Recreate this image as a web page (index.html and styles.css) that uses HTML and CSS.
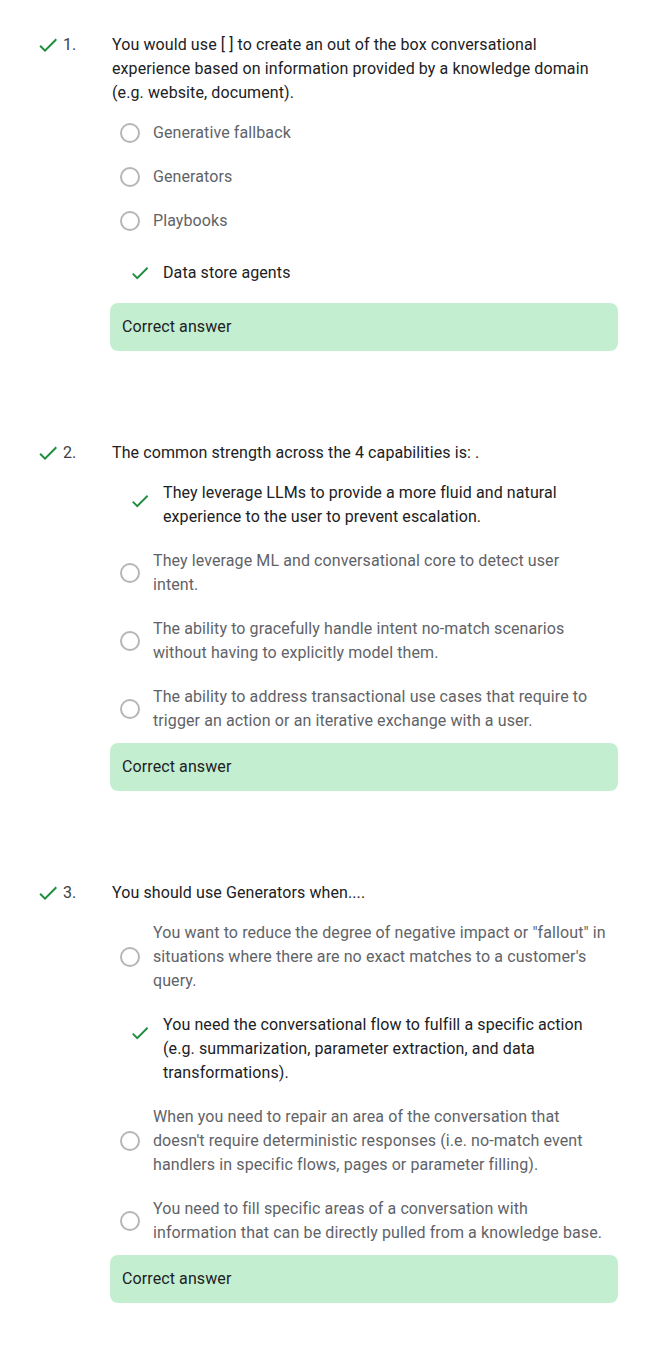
FILE: index.html
```html
<!DOCTYPE html>
<html lang="en">
<head>
<meta charset="utf-8">
<title>Quiz results</title>
<link rel="stylesheet" href="styles.css">
</head>
<body>
<main class="quiz">

  <section class="q">
    <div class="q-head">
      <span class="q-mark"><svg viewBox="0 0 24 24"><path d="M9 16.17L4.83 12l-1.42 1.41L9 19 21 7l-1.41-1.41z"/></svg></span>
      <span class="q-num">1.</span>
      <p class="q-text">You would use [ ] to create an out of the box conversational experience based on information provided by a knowledge domain (e.g. website, document).</p>
    </div>
    <div class="q-body">
      <ul class="opts">
        <li class="opt"><span class="radio-wrap"><span class="radio"></span></span><span class="opt-text">Generative fallback</span></li>
        <li class="opt"><span class="radio-wrap"><span class="radio"></span></span><span class="opt-text">Generators</span></li>
        <li class="opt"><span class="radio-wrap"><span class="radio"></span></span><span class="opt-text">Playbooks</span></li>
        <li class="opt opt-correct"><span class="check-wrap"><svg viewBox="0 0 24 24"><path d="M9 16.17L4.83 12l-1.42 1.41L9 19 21 7l-1.41-1.41z"/></svg></span><span class="opt-text">Data store agents</span></li>
      </ul>
      <div class="result">Correct answer</div>
    </div>
  </section>

  <section class="q">
    <div class="q-head">
      <span class="q-mark"><svg viewBox="0 0 24 24"><path d="M9 16.17L4.83 12l-1.42 1.41L9 19 21 7l-1.41-1.41z"/></svg></span>
      <span class="q-num">2.</span>
      <p class="q-text">The common strength across the 4 capabilities is: .</p>
    </div>
    <div class="q-body">
      <ul class="opts">
        <li class="opt opt-correct"><span class="check-wrap"><svg viewBox="0 0 24 24"><path d="M9 16.17L4.83 12l-1.42 1.41L9 19 21 7l-1.41-1.41z"/></svg></span><span class="opt-text">They leverage LLMs to provide a more fluid and natural experience to the user to prevent escalation.</span></li>
        <li class="opt"><span class="radio-wrap"><span class="radio"></span></span><span class="opt-text">They leverage ML and conversational core to detect user intent.</span></li>
        <li class="opt"><span class="radio-wrap"><span class="radio"></span></span><span class="opt-text">The ability to gracefully handle intent no-match scenarios without having to explicitly model them.</span></li>
        <li class="opt"><span class="radio-wrap"><span class="radio"></span></span><span class="opt-text">The ability to address transactional use cases that require to trigger an action or an iterative exchange with a user.</span></li>
      </ul>
      <div class="result">Correct answer</div>
    </div>
  </section>

  <section class="q">
    <div class="q-head">
      <span class="q-mark"><svg viewBox="0 0 24 24"><path d="M9 16.17L4.83 12l-1.42 1.41L9 19 21 7l-1.41-1.41z"/></svg></span>
      <span class="q-num">3.</span>
      <p class="q-text">You should use Generators when....</p>
    </div>
    <div class="q-body">
      <ul class="opts">
        <li class="opt"><span class="radio-wrap"><span class="radio"></span></span><span class="opt-text">You want to reduce the degree of negative impact or "fallout" in situations where there are no exact matches to a customer's query.</span></li>
        <li class="opt opt-correct"><span class="check-wrap"><svg viewBox="0 0 24 24"><path d="M9 16.17L4.83 12l-1.42 1.41L9 19 21 7l-1.41-1.41z"/></svg></span><span class="opt-text">You need the conversational flow to fulfill a specific action (e.g. summarization, parameter extraction, and data transformations).</span></li>
        <li class="opt"><span class="radio-wrap"><span class="radio"></span></span><span class="opt-text">When you need to repair an area of the conversation that doesn't require deterministic responses (i.e. no-match event handlers in specific flows, pages or parameter filling).</span></li>
        <li class="opt"><span class="radio-wrap"><span class="radio"></span></span><span class="opt-text">You need to fill specific areas of a conversation with information that can be directly pulled from a knowledge base.</span></li>
      </ul>
      <div class="result">Correct answer</div>
    </div>
  </section>

</main>
</body>
</html>
```

FILE: styles.css
```css
html, body {
  margin: 0;
  padding: 0;
  background: #ffffff;
}

body {
  font-family: Roboto, "Liberation Sans", Arial, sans-serif;
  font-size: 16px;
  letter-spacing: 0.1px;
  line-height: 24px;
  color: #202124;
}

.quiz {
  padding: 33px 41px 0 36px;
  display: flex;
  flex-direction: column;
  gap: 90px;
}

.q-head {
  display: flex;
  align-items: flex-start;
}

.q-mark {
  width: 24px;
  height: 24px;
  flex: none;
  display: flex;
  align-items: center;
  justify-content: center;
}

.q-mark svg {
  width: 24px;
  height: 24px;
  fill: #1e8e3e;
}

.q-num {
  width: 49px;
  margin-left: 3px;
  flex: none;
  color: #3c4043;
}

.q-text {
  margin: 0;
  flex: 1;
  color: #202124;
}

.q-body {
  margin-left: 74px;
}

.opts {
  list-style: none;
  margin: 16px 0 0;
  padding: 0 11px 0 0;
  display: flex;
  flex-direction: column;
  gap: 20px;
}

.opt {
  display: flex;
  align-items: center;
}

.radio-wrap {
  width: 40px;
  flex: none;
  display: flex;
  justify-content: center;
}

.radio {
  width: 20px;
  height: 20px;
  box-sizing: border-box;
  border: 2px solid #b6b6b6;
  border-radius: 50%;
}

.opt-text {
  margin-left: 3px;
  color: #5f6368;
}

.opt-correct {
  padding-left: 10px;
}

.check-wrap {
  width: 40px;
  height: 40px;
  flex: none;
  align-self: flex-start;
  display: flex;
  align-items: center;
  justify-content: center;
}

.check-wrap svg {
  width: 22px;
  height: 22px;
  fill: #1e8e3e;
}

.opt-correct .opt-text {
  color: #202124;
  align-self: center;
}

.result {
  margin-top: 10px;
  height: 48px;
  line-height: 48px;
  padding: 0 12px;
  border-radius: 8px;
  background: #c4eed0;
  color: #202124;
}
```
